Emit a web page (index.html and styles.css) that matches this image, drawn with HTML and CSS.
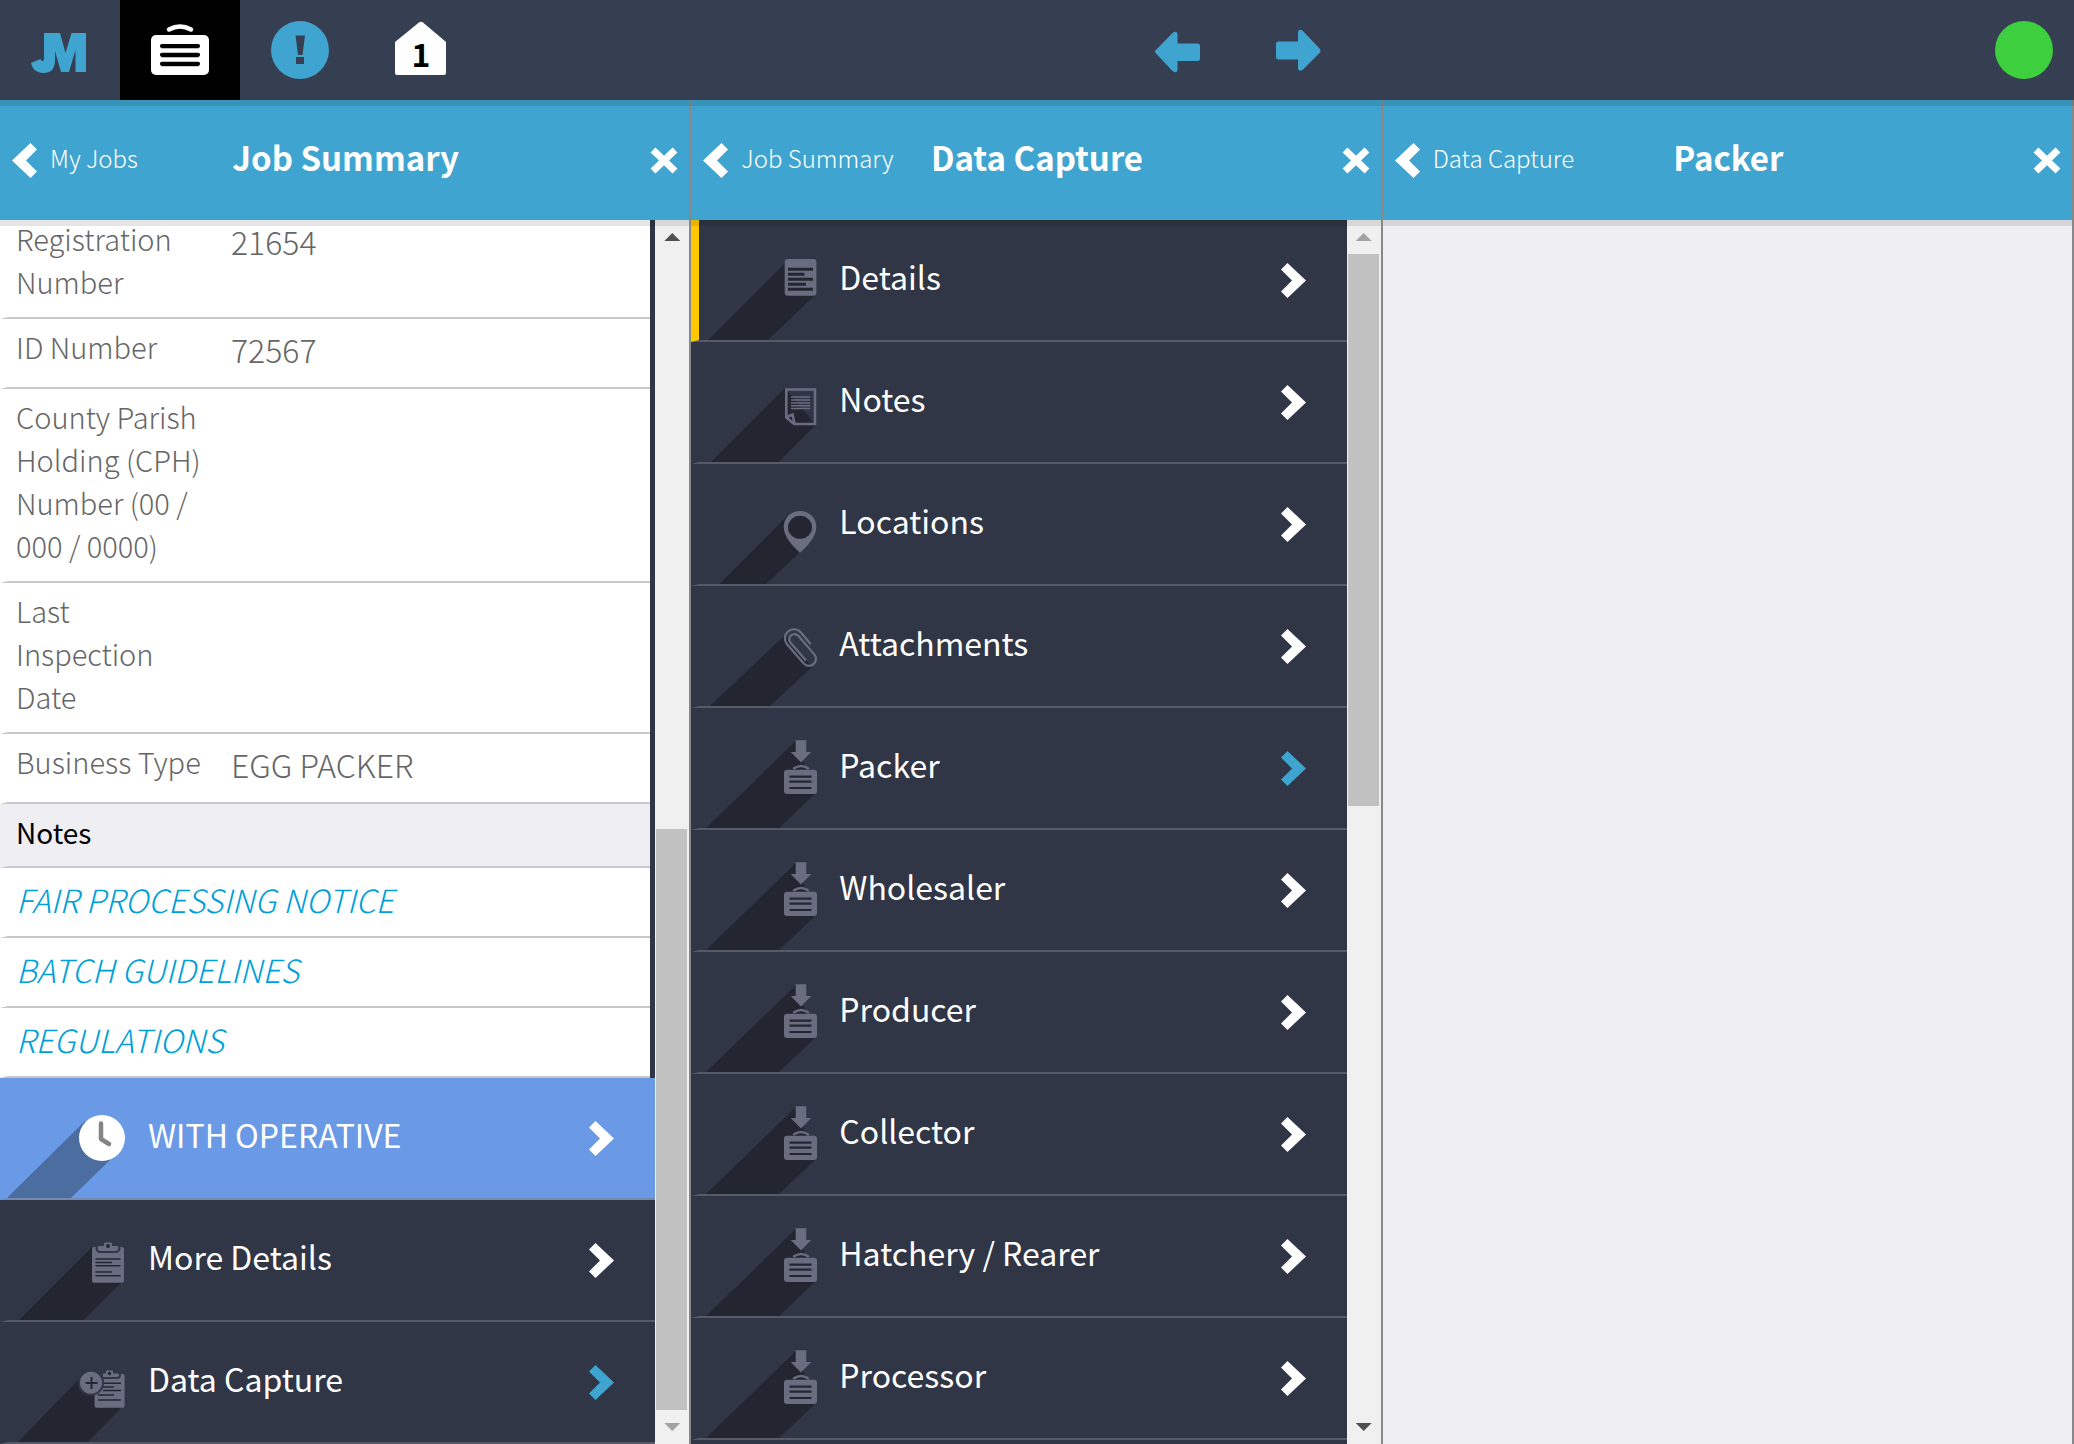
FILE: index.html
```html
<!DOCTYPE html>
<html lang="en">
<head>
<meta charset="utf-8">
<title>Data Capture - Packer</title>
<meta name="viewport" content="width=device-width, initial-scale=1">
<link rel="stylesheet" href="styles.css">
</head>
<body>
<svg class="defs" aria-hidden="true">
  <symbol id="chevron" viewBox="0 0 25 35"><path d="M0 6.500 6.500 0 25 17.500 6.500 35 0 28.500 11 17.500z" fill="currentColor"/></symbol>
  <symbol id="cross" viewBox="0 0 30 28"><path d="M4 4 26 25M26 4 4 25" stroke="currentColor" stroke-width="7"/></symbol>
  <symbol id="case" viewBox="8 0 122 120">
    <path class="shade" d="M105 33 15 120H88L124 86z"/>
    <path class="ink" d="M104.700 32.300h10.600V44h5L110 54.500 99.700 44h5z"/>
    <path d="M103 60.300q7-4.600 14 0" fill="none" stroke="#6b6b80" stroke-width="2.400" stroke-linecap="round"/>
    <rect class="ink" x="93" y="61.700" width="33" height="24.300" rx="3"/>
    <path class="cut" d="M98.500 68.700h22M98.500 73.700h22M98.500 80h22" stroke-width="2.200"/>
  </symbol>
</svg>

<header class="topbar">
  <nav class="tabs" aria-label="Main">
    <a class="tab" href="#home" aria-label="Home">
      <svg width="120" height="100" viewBox="0 0 120 100"><path fill="#3fa4cf" d="M44 33h16l5.500 20 6-20H86v39H75.500V50L69 72h-8L55 51v9c0 9-4 13-11.500 13C37 73 32.500 69.500 31 63l9.500-4q.5 2 2 2T44 59z"/></svg>
    </a>
    <a class="tab tab-active" href="#jobs" aria-label="Jobs">
      <svg width="120" height="100" viewBox="0 0 120 100">
        <path d="M49 29.500q11-6 22 0" fill="none" stroke="#fff" stroke-width="4.500" stroke-linecap="round"/>
        <rect x="31" y="35" width="58" height="40" rx="5" fill="#fff"/>
        <path d="M42 48h36M42 57h36M42 65.800h36" stroke="#bbb" stroke-width="2" stroke-linecap="round"/>
        <path d="M42 46h36M42 54.800h36M42 63.800h36" stroke="#000" stroke-width="4.200" stroke-linecap="round"/>
      </svg>
    </a>
    <a class="tab" href="#alerts" aria-label="Alerts">
      <svg width="120" height="100" viewBox="0 0 120 100">
        <circle cx="60" cy="50" r="29" fill="#3fa4cf"/>
        <path d="M55.500 35.500h9.500L62.500 55h-4.500zM56 57h8v7h-8z" fill="#363f51"/>
      </svg>
    </a>
    <a class="tab" href="#level" aria-label="Level 1">
      <svg width="120" height="100" viewBox="0 0 120 100">
        <path d="M59 22.500q2-1.500 4 0L86 42V73q0 2-2 2H37q-2 0-2-2V42z" fill="#fff"/>
        <text class="level" x="61" y="67" text-anchor="middle">1</text>
      </svg>
    </a>
  </nav>
  <div class="history">
    <button class="tab" type="button" aria-label="Previous">
      <svg width="120" height="100" viewBox="0 0 120 100"><path d="M38 50 54.500 33q4-3 5 1v9.500h20q2.500 0 2.500 2.500v12.500q0 2.500-2.500 2.500h-20v9q-1 4-5 1L38 53.500q-2-2 0-3.500z" fill="#3fa4cf"/></svg>
    </button>
    <button class="tab" type="button" aria-label="Next">
      <svg width="120" height="100" viewBox="0 0 120 100"><path d="M81.500 48.500 65 31q-4-3-5 1v9.500H40.500q-2.500 0-2.500 2.500v13q0 2.500 2.500 2.500H60v9q1 4 5 1L81.500 53q2-2 0-4.500z" fill="#3fa4cf"/></svg>
    </button>
  </div>
  <div class="status"><span class="status-dot" role="img" aria-label="Online"></span></div>
</header>

<main class="columns">
  <section class="column">
    <header class="column-head">
      <button class="back" type="button"><svg class="chev flip" width="25" height="35"><use href="#chevron"/></svg><span>My Jobs</span></button>
      <h2>Job Summary</h2>
      <button class="close" type="button" aria-label="Close Job Summary"><svg width="30" height="28"><use href="#cross"/></svg></button>
    </header>
    <div class="column-body">
      <div class="list list-end">
        <div class="summary">
          <dl>
            <div class="field"><dt>Registration Number</dt><dd>21654</dd></div>
            <div class="field"><dt>ID Number</dt><dd>72567</dd></div>
            <div class="field"><dt>County Parish Holding (CPH) Number (00 / 000 / 0000)</dt><dd></dd></div>
            <div class="field"><dt>Last Inspection Date</dt><dd></dd></div>
            <div class="field"><dt>Business Type</dt><dd>EGG PACKER</dd></div>
          </dl>
          <h3>Notes</h3>
          <a class="note" href="#fair-processing">FAIR PROCESSING NOTICE</a>
          <a class="note" href="#batch">BATCH GUIDELINES</a>
          <a class="note" href="#regulations">REGULATIONS</a>
        </div>
        <a class="row row-status" href="#operative">
          <svg class="icon" viewBox="8 0 122 120">
            <path d="M85 43 7 120H71L111 81z" fill="#4b6da0"/>
            <circle cx="102" cy="60" r="23" fill="#fff"/>
            <path d="M101 45.500V61l8 5" fill="none" stroke="#858585" stroke-width="4.500" stroke-linecap="round" stroke-linejoin="round"/>
          </svg>
          <span>WITH OPERATIVE</span><svg class="chev" width="25" height="35"><use href="#chevron"/></svg>
        </a>
        <a class="row" href="#more">
          <svg class="icon" viewBox="8 0 122 120">
            <path class="shade" d="M92 47 19 120H84L122 82z"/>
            <rect class="ink" x="92" y="47" width="32" height="35.700" rx="2"/>
            <path class="ink edge" d="M103 45v-1q0-2.500 2.500-2.500h5q2.500 0 2.500 2.500v1h4q2.500 0 2.500 3t-3 4h-17q-3-1-3-4t2.500-3z"/>
            <circle cx="108" cy="46" r="2" fill="#232631"/>
            <path class="cut" d="M95.500 59h25M95.500 62.500H112M95.500 65.700h25M95.500 72H112M95.500 75.700h25" stroke-width="1.600"/>
          </svg>
          <span>More Details</span><svg class="chev" width="25" height="35"><use href="#chevron"/></svg>
        </a>
        <a class="row row-open" href="#capture">
          <svg class="icon" viewBox="8 0 122 120">
            <path class="shade" d="M82 54 18 120H88L122 85z"/>
            <rect class="ink" x="94.600" y="52" width="30" height="33.700" rx="2"/>
            <path class="ink edge" d="M105 50.500v-1q0-2 2-2h5q2 0 2 2v1h3.500q2.500 0 2.500 2.500t-2.500 3h-15.500V50.500z"/>
            <circle cx="109.500" cy="51.500" r="1.700" fill="#232631"/>
            <path class="cut" d="M103 61.300h18M103 65h11M103 68.500h18M98 73h16M98 78h23" stroke-width="1.600"/>
            <circle class="ink edge" cx="91" cy="60.700" r="12"/>
            <path class="cut" d="M85.500 61h12M91.500 55v12" stroke-width="2"/>
          </svg>
          <span>Data Capture</span><svg class="chev" width="25" height="35"><use href="#chevron"/></svg>
        </a>
      </div>
      <div class="scrollbar scrollbar-end" aria-hidden="true">
        <i class="arrow up on"></i><i class="thumb"></i><i class="arrow down"></i>
      </div>
    </div>
  </section>

  <section class="column">
    <header class="column-head">
      <button class="back" type="button"><svg class="chev flip" width="25" height="35"><use href="#chevron"/></svg><span>Job Summary</span></button>
      <h2>Data Capture</h2>
      <button class="close" type="button" aria-label="Close Data Capture"><svg width="30" height="28"><use href="#cross"/></svg></button>
    </header>
    <div class="column-body">
      <div class="list">
        <a class="row row-marked" href="#details">
          <svg class="icon" viewBox="8 0 122 120">
            <path class="shade" d="M94 43 17 120H77L124 75z"/>
            <rect class="ink" x="93.700" y="39" width="31.700" height="36.700" rx="3"/>
            <path class="cut" d="M97 49.300h25M97 54.300h16.500M97 59.300h25M97 64.300h18M97 69.300h25" stroke-width="3"/>
          </svg>
          <span>Details</span><svg class="chev" width="25" height="35"><use href="#chevron"/></svg>
        </a>
        <a class="row" href="#notes">
          <svg class="icon" viewBox="8 0 122 120">
            <path class="shade" d="M94 46 20 120H88L125 83z"/>
            <path d="M95.300 47.500H124V82H103L95.300 75.500zM96 75l5.500-2.500 2 9" fill="none" stroke="#6a6d80" stroke-width="2.600"/>
            <path d="M100 55h19M100 58h19M100 61h19M100 63.700h19M100 66.400h19" stroke="#6a6d80" stroke-width="1.500"/>
          </svg>
          <span>Notes</span><svg class="chev" width="25" height="35"><use href="#chevron"/></svg>
        </a>
        <a class="row" href="#locations">
          <svg class="icon" viewBox="8 0 122 120">
            <path class="shade" d="M97 51 28 120H75L109 88z"/>
            <path class="ink" d="M109 47c9.500 0 16.300 7 16.300 16C125.300 73 116 82.500 109 88.700 102 82.500 92.700 73 92.700 63c0-9 6.800-16 16.300-16z"/>
            <ellipse cx="109" cy="63.300" rx="12" ry="11.500" fill="#232631"/>
          </svg>
          <span>Locations</span><svg class="chev" width="25" height="35"><use href="#chevron"/></svg>
        </a>
        <a class="row" href="#attachments">
          <svg class="icon" viewBox="8 0 122 120">
            <path class="shade" d="M94 49 19 120H79L121 81z"/>
            <path d="M119.700 58.300 110 46.500A9 9 0 0 0 96 58.200L113 77.800A7 7 0 0 0 123.500 68.600L107.500 50A5 5 0 0 0 99.500 56.800L115 74.500" fill="none" stroke="#6a6d80" stroke-width="2.200"/>
          </svg>
          <span>Attachments</span><svg class="chev" width="25" height="35"><use href="#chevron"/></svg>
        </a>
        <a class="row row-open" href="#packer"><svg class="icon"><use href="#case"/></svg><span>Packer</span><svg class="chev" width="25" height="35"><use href="#chevron"/></svg></a>
        <a class="row" href="#wholesaler"><svg class="icon"><use href="#case"/></svg><span>Wholesaler</span><svg class="chev" width="25" height="35"><use href="#chevron"/></svg></a>
        <a class="row" href="#producer"><svg class="icon"><use href="#case"/></svg><span>Producer</span><svg class="chev" width="25" height="35"><use href="#chevron"/></svg></a>
        <a class="row" href="#collector"><svg class="icon"><use href="#case"/></svg><span>Collector</span><svg class="chev" width="25" height="35"><use href="#chevron"/></svg></a>
        <a class="row" href="#hatchery"><svg class="icon"><use href="#case"/></svg><span>Hatchery / Rearer</span><svg class="chev" width="25" height="35"><use href="#chevron"/></svg></a>
        <a class="row" href="#processor"><svg class="icon"><use href="#case"/></svg><span>Processor</span><svg class="chev" width="25" height="35"><use href="#chevron"/></svg></a>
      </div>
      <div class="scrollbar" aria-hidden="true">
        <i class="arrow up"></i><i class="thumb"></i><i class="arrow down on"></i>
      </div>
    </div>
  </section>

  <section class="column">
    <header class="column-head">
      <button class="back" type="button"><svg class="chev flip" width="25" height="35"><use href="#chevron"/></svg><span>Data Capture</span></button>
      <h2>Packer</h2>
      <button class="close" type="button" aria-label="Close Packer"><svg width="30" height="28"><use href="#cross"/></svg></button>
    </header>
    <div class="column-body"></div>
  </section>
</main>
</body>
</html>
```

FILE: styles.css
```css
* { box-sizing: border-box; }

body {
  margin: 0;
  height: 100vh;
  display: flex;
  flex-direction: column;
  overflow: hidden;
  background: #efeef3;
  font-family: "Noto Sans CJK SC", "Open Sans", sans-serif;
}

svg { display: block; flex: none; }
a { text-decoration: none; }
button { border: 0; padding: 0; background: none; font: inherit; color: inherit; }
.defs { position: absolute; width: 0; height: 0; }

/* Top bar */
.topbar {
  position: relative;
  z-index: 3;
  flex: none;
  display: flex;
  justify-content: space-between;
  height: 100px;
  background: #363f51;
  box-shadow: 0 6px 0 rgba(0, 0, 0, .1);
}
.tabs, .history { display: flex; }
.tab { display: block; width: 120px; height: 100px; }
.tab-active { background: #000; }
.level { font-size: 32px; font-weight: 700; fill: #000; }
.status { display: flex; align-items: center; width: 79px; }
.status-dot { width: 58px; height: 58px; border-radius: 50%; background: #3ecf3e; }

/* Columns */
.columns { flex: 1; min-height: 0; display: grid; grid-template-columns: repeat(3, 1fr); }
.column { display: flex; flex-direction: column; min-width: 0; min-height: 0; border-right: 2px solid #888; }
.column-head {
  position: relative;
  z-index: 2;
  flex: none;
  display: grid;
  grid-template-columns: 1fr auto 1fr;
  align-items: center;
  height: 120px;
  padding: 0 10px 0 12px;
  background: #3fa4cf;
  color: #fff;
  box-shadow: 0 6px 0 rgba(0, 0, 0, .1);
}
.column-head h2 { margin: 0; padding-bottom: 6px; font-size: 33px; line-height: 48px; font-weight: 700; }
.back { display: flex; align-items: center; gap: 13px; font-size: 24px; line-height: 36px; font-weight: 300; white-space: nowrap; }
.back span { padding-bottom: 5px; }
.close { justify-self: end; }
.flip { transform: scaleX(-1); }
.column-body { flex: 1; min-height: 0; display: flex; }

/* Lists */
.list { flex: 1; min-width: 0; display: flex; flex-direction: column; overflow: hidden; background: #303645; }
.list-end { justify-content: flex-end; }
.row {
  flex: none;
  display: flex;
  align-items: center;
  height: 122px;
  padding-right: 41px;
  border-left: 8px solid #303645;
  border-bottom: 2px solid #555a66;
  color: #fff;
  font-size: 32px;
  line-height: 48px;
}
.row span { flex: 1; padding: 0 0 8px 18px; }
.icon { width: 122px; height: 120px; }
.shade { fill: #232631; }
.ink { fill: #6a6d80; }
.edge { stroke: #303645; stroke-width: 2; }
.cut { fill: none; stroke: #232631; }
.row-status { background: #6a9ae5; border-left-color: #6a9ae5; border-bottom-color: #778bb0; }
.row-marked { border-left-color: #ffc800; }
.row-open .chev { color: #3fa4cf; }

/* Job summary */
.summary { flex: none; margin-right: 5px; background: #fff; font-size: 29px; line-height: 43px; }
.summary dl { margin: 0; }
.field {
  display: grid;
  grid-template-columns: 209px 1fr;
  padding: 6px 0 14px;
  border-left: 8px solid #fff;
  border-bottom: 2px solid #c7c7cc;
  color: #666;
  font-weight: 300;
}
.field dt { padding: 0 14px 0 8px; }
.field dd { margin: 0; padding-left: 14px; font-size: 32px; line-height: 48px; }
.summary h3 {
  margin: 0;
  padding: 7px 0 12px 8px;
  border-left: 8px solid #efeef3;
  border-bottom: 2px solid #c7c7cc;
  background: #efeef3;
  font-size: 28px;
  line-height: 43px;
  font-weight: 400;
}
.note {
  display: block;
  padding: 7px 0 13px 8px;
  border-left: 8px solid #fff;
  border-bottom: 2px solid #c7c7cc;
  color: #009fd9;
  font-size: 32px;
  line-height: 48px;
  font-style: italic;
  font-weight: 300;
}

/* Scrollbar */
.scrollbar {
  flex: none;
  width: 34px;
  display: grid;
  grid-template-rows: 34px 552fr 604fr 34px;
  background: #f0f0f0;
}
.scrollbar-end { grid-template-rows: 34px 575fr 581fr 34px; }
.thumb { grid-row: 2; margin: 0 2px 0 1px; background: #c1c1c1; }
.scrollbar-end .thumb { grid-row: 3; }
.arrow { place-self: center; width: 16px; height: 8px; background: #a3a3a3; }
.arrow.on { background: #505050; }
.up { grid-row: 1; clip-path: polygon(50% 0, 100% 100%, 0 100%); }
.down { grid-row: 4; clip-path: polygon(0 0, 100% 0, 50% 100%); }
```
